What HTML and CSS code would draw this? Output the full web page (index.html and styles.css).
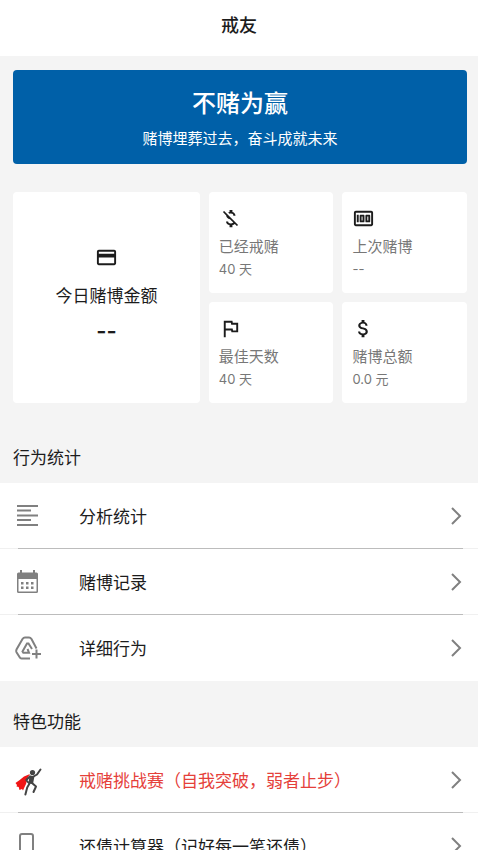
FILE: index.html
```html
<!DOCTYPE html>
<html lang="zh-CN">
<head>
<meta charset="utf-8">
<meta name="viewport" content="width=device-width, initial-scale=1">
<title>戒友</title>
<link rel="stylesheet" href="styles.css">
</head>
<body>
<header class="topbar"><h1>戒友</h1></header>
<main>
  <section class="banner">
    <h2>不赌为赢</h2>
    <p>赌博埋葬过去，奋斗成就未来</p>
  </section>

  <section class="stats">
    <article class="card card-main">
      <svg class="stat-icon" viewBox="0 0 24 24"><path d="M20 4H4c-1.110 0-2 .89-2 2v12c0 1.110.89 2 2 2h16c1.110 0 2-.89 2-2V6c0-1.110-.89-2-2-2zm0 14H4v-6h16v6zm0-10H4V6h16v2z"/></svg>
      <h3>今日赌博金额</h3>
      <strong>--</strong>
    </article>
    <article class="card">
      <svg class="stat-icon" viewBox="0 0 24 24"><path d="M12.500 6.900c1.780 0 2.440.85 2.500 2.100h2.210c-.07-1.720-1.120-3.300-3.210-3.810V3h-3v2.160c-.53.12-1.030.3-1.480.54l1.470 1.470c.41-.17.91-.27 1.510-.27zM5.330 4.060L4.060 5.330 7.500 8.770c0 2.080 1.560 3.210 3.910 3.910l3.510 3.510c-.34.48-1.050.91-2.420.91-2.060 0-2.870-.92-2.980-2.100h-2.200c.12 2.190 1.760 3.420 3.680 3.830V21h3v-2.150c.96-.18 1.820-.55 2.450-1.120l2.220 2.220 1.270-1.270L5.330 4.060z"/></svg>
      <h3>已经戒赌</h3>
      <p>40 天</p>
    </article>
    <article class="card">
      <svg class="stat-icon" viewBox="0 0 24 24"><path d="M15 16h3c.55 0 1-.45 1-1V9c0-.55-.45-1-1-1h-3c-.55 0-1 .45-1 1v6c0 .55.45 1 1 1zm1-6h1v4h-1v-4zM9 16h3c.55 0 1-.45 1-1V9c0-.55-.45-1-1-1H9c-.55 0-1 .45-1 1v6c0 .55.45 1 1 1zm1-6h1v4h-1v-4zM5 8h2v8H5z"/><path d="M20 4H4c-1.110 0-2 .89-2 2v12c0 1.110.89 2 2 2h16c1.110 0 2-.89 2-2V6c0-1.110-.89-2-2-2zm0 14H4V6h16v12z"/></svg>
      <h3>上次赌博</h3>
      <p>--</p>
    </article>
    <article class="card">
      <svg class="stat-icon" viewBox="0 0 24 24"><path d="M12.360 6l.4 2H18v6h-3.360l-.4-2H7V6h5.360M14 4H5v17h2v-7h5.600l.4 2h7V6h-5.600L14 4z"/></svg>
      <h3>最佳天数</h3>
      <p>40 天</p>
    </article>
    <article class="card">
      <svg class="stat-icon" viewBox="0 0 24 24"><path d="M11.800 10.900c-2.270-.59-3-1.200-3-2.150 0-1.090 1.010-1.850 2.700-1.850 1.780 0 2.440.85 2.500 2.100h2.210c-.07-1.720-1.120-3.300-3.210-3.810V3h-3v2.160c-1.940.42-3.500 1.680-3.500 3.610 0 2.310 1.910 3.460 4.700 4.130 2.500.6 3 1.480 3 2.410 0 .69-.49 1.790-2.700 1.790-2.060 0-2.870-.92-2.980-2.100h-2.200c.12 2.190 1.760 3.420 3.680 3.830V21h3v-2.150c1.950-.37 3.500-1.500 3.500-3.550 0-2.840-2.430-3.810-4.700-4.400z"/></svg>
      <h3>赌博总额</h3>
      <p>0.0 元</p>
    </article>
  </section>

  <h2 class="section-title">行为统计</h2>
  <nav class="list" aria-label="行为统计">
    <a class="row" href="#analysis">
      <svg class="row-icon" viewBox="0 0 28 28"><path class="line" d="M4 4h21M4 8.500h14M4 13.500h21M4 18h14M4 23h21"/></svg>
      <span>分析统计</span>
      <svg class="chevron" viewBox="0 0 12 20"><path d="M2 2l8 8-8 8"/></svg>
    </a>
    <a class="row" href="#records">
      <svg class="row-icon" viewBox="0 0 28 28"><path class="fill" fill-rule="evenodd" d="M7 2h2v2.500h11V2h2v2.500h1.500a1.500 1.500 0 0 1 1.500 1.500v17.500a1.500 1.500 0 0 1-1.500 1.500h-18A1.500 1.500 0 0 1 4 23.500V6a1.500 1.500 0 0 1 1.500-1.500H7zM5.500 11v12.500h18V11z"/><path class="fill" d="M8 14h2.500v2.500H8zm5 0h2.500v2.500H13zm5 0h2.500v2.500H18zM8 18.500h2.500V21H8zm5 0h2.500V21H13zm5 0h2.500V21H18z"/></svg>
      <span>赌博记录</span>
      <svg class="chevron" viewBox="0 0 12 20"><path d="M2 2l8 8-8 8"/></svg>
    </a>
    <a class="row" href="#details">
      <svg class="row-icon" viewBox="0 0 28 28"><path class="line" d="M23.500 14.500L18.500 5Q17.500 3.500 16 3.500h-4Q10.500 3.500 9.500 5L3.500 15.500Q2.800 17 3.500 18.200L6.500 23Q7.300 24.500 8.500 24.500H17"/><path class="line" d="M19 15l-3.500-5.500h-1.500L9.500 17.500l.8 1.200H16L14.500 15M23.500 15.500v9M19 20h9"/></svg>
      <span>详细行为</span>
      <svg class="chevron" viewBox="0 0 12 20"><path d="M2 2l8 8-8 8"/></svg>
    </a>
  </nav>

  <h2 class="section-title">特色功能</h2>
  <nav class="list" aria-label="特色功能">
    <a class="row row-hot" href="#challenge">
      <svg class="row-icon" viewBox="0 0 28 28"><path class="cape" d="M17 8L11 10.500Q7 14 2.500 17l1.500 2-.5 1.500 2.200.5.800 3 2.500-1 1 1.500Q11.500 21 13 18l2-7z"/><circle class="hero-head" cx="19.500" cy="6.500" r="2.600"/><path class="hero-body" d="M16.500 9.500l5 .5-1.500 8-4.500-.5z"/><path class="hero-limb" d="M20.500 10.500l3.500-2 3.500-5M16.800 10.500l-3.500 3.500 2 2.500M16.800 17l-2.600 4.500-1.800 7M19 17l4 3.500-2.500 5.500"/></svg>
      <span>戒赌挑战赛（自我突破，弱者止步）</span>
      <svg class="chevron" viewBox="0 0 12 20"><path d="M2 2l8 8-8 8"/></svg>
    </a>
    <a class="row" href="#calculator">
      <svg class="row-icon" viewBox="0 0 28 28"><rect class="line" x="7" y="2" width="13" height="24" rx="2"/><path class="line" d="M7 21h13"/></svg>
      <span>还债计算器（记好每一笔还债）</span>
      <svg class="chevron" viewBox="0 0 12 20"><path d="M2 2l8 8-8 8"/></svg>
    </a>
  </nav>
</main>
</body>
</html>
```
FILE: styles.css
```css
* {
  box-sizing: border-box;
}

html {
  height: 100%;
  overflow: hidden;
}

body {
  height: 100%;
  margin: 0;
  overflow-x: hidden;
  overflow-y: auto;
  scrollbar-width: none;
  background: #f4f4f4;
  color: #1c1c1c;
  font-family: "Noto Sans CJK SC", sans-serif;
  font-size: 17px;
  line-height: 24px;
}

h1, h2, h3, p {
  margin: 0;
  font-weight: 400;
}

.topbar {
  height: 56px;
  padding-top: 12px;
  background: #fff;
  text-align: center;
}

.topbar h1 {
  font-size: 18px;
  font-weight: 500;
}

.banner {
  margin: 14px 11px 0 13px;
  padding: 16px 12px 14px;
  border-radius: 4px;
  background: #0060a8;
  color: #fff;
  text-align: center;
}

.banner h2 {
  font-size: 24px;
  font-weight: 500;
  line-height: 32px;
}

.banner p {
  margin-top: 8px;
  font-size: 15px;
}

.stats {
  display: grid;
  grid-template-columns: 3fr 2fr 2fr;
  grid-template-rows: 101px 101px;
  gap: 9px;
  margin: 28px 11px 14px 13px;
}

.card {
  padding: 15px 10px 10px;
  border-radius: 4px;
  background: #fff;
  color: #777;
}

.card h3 {
  font-size: 15px;
  line-height: 23px;
}

.card p {
  font-family: Inter, "Noto Sans CJK SC", sans-serif;
  font-size: 13px;
}

.stat-icon {
  display: block;
  width: 23px;
  height: 23px;
  margin-bottom: 4px;
  fill: #1c1c1c;
}

.card-main {
  grid-row: span 2;
  display: flex;
  flex-direction: column;
  align-items: center;
  justify-content: center;
  padding: 10px 10px 16px;
  color: #1c1c1c;
}

.card-main .stat-icon {
  margin-bottom: 14px;
}

.card-main h3 {
  font-size: 17px;
  line-height: 24px;
}

.card-main strong {
  margin-top: 12px;
  font-family: Inter, sans-serif;
  font-size: 22px;
  font-weight: 600;
}

.section-title {
  height: 66px;
  padding: 28px 13px 0;
  font-size: 17px;
}

.list {
  background: #fff;
}

.row {
  position: relative;
  display: flex;
  align-items: center;
  height: 66px;
  padding: 0 16px 0 13px;
  border-bottom: 1px solid #f0f0f0;
  color: #1c1c1c;
  text-decoration: none;
}

.row:last-child {
  border-bottom-color: #fff;
}

.row:not(:last-child)::after {
  content: "";
  position: absolute;
  right: 15px;
  bottom: -1px;
  left: 18px;
  height: 1px;
  background: #bcbcbc;
}

.row span {
  flex: 1;
  white-space: nowrap;
}

.row-hot {
  color: #e5403a;
}

.row-icon {
  flex: none;
  width: 28px;
  height: 28px;
  margin-right: 38px;
  overflow: visible;
}

.line {
  fill: none;
  stroke: #808080;
  stroke-width: 2;
}

.fill {
  fill: #808080;
}

.cape {
  fill: #f01414;
}

.hero-head,
.hero-body {
  fill: #444;
}

.hero-limb {
  fill: none;
  stroke: #444;
  stroke-width: 2;
  stroke-linecap: round;
  stroke-linejoin: round;
}

.chevron {
  flex: none;
  width: 12px;
  height: 20px;
  fill: none;
  stroke: #808080;
  stroke-width: 2;
}
```
